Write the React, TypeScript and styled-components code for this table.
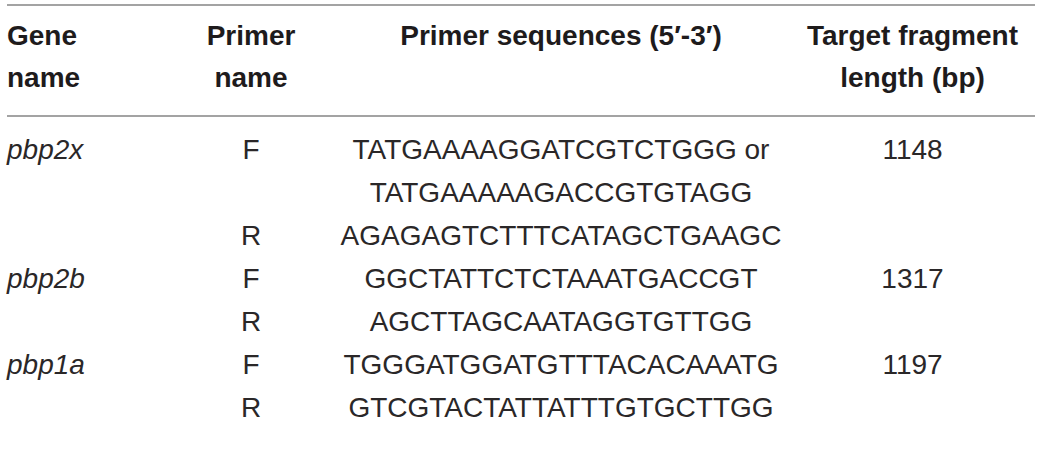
import React from 'react'
import styled, { createGlobalStyle } from 'styled-components'

const GlobalStyle = createGlobalStyle`
	html, body {
		margin: 0;
		padding: 0;
		background: #ffffff;
	}
	body {
		font-family: "Liberation Sans", Arial, Helvetica, sans-serif;
		color: #231f20;
	}
`

const Table = styled.div`
	width: 1028px;
	margin-left: 7px;
	padding-top: 4px;
`

const Rule = styled.div`
	height: 0;
	border-top: 2px solid #a3a3a3;
`

const Grid = styled.div<{ $head?: boolean }>`
	display: grid;
	grid-template-columns: 163px 162px 458px 245px;
	padding: ${(p) => (p.$head ? '9px 0 16px' : '11px 0 0')};
	font-size: 28px;
	line-height: ${(p) => (p.$head ? '42px' : '43px')};
	font-weight: ${(p) => (p.$head ? 700 : 400)};
	color: ${(p) => (p.$head ? '#1e1b1c' : '#2a2728')};
`

const Cell = styled.div<{ $align?: 'left' | 'center'; $italic?: boolean }>`
	text-align: ${(p) => p.$align || 'center'};
	font-style: ${(p) => (p.$italic ? 'italic' : 'normal')};
	white-space: nowrap;
`

type Primer = { name: string; seqs: string[] }
type Gene = { gene: string; length: string; primers: Primer[] }

const genes: Gene[] = [
	{
		gene: 'pbp2x',
		length: '1148',
		primers: [
			{ name: 'F', seqs: ['TATGAAAAGGATCGTCTGGG or', 'TATGAAAAAGACCGTGTAGG'] },
			{ name: 'R', seqs: ['AGAGAGTCTTTCATAGCTGAAGC'] },
		],
	},
	{
		gene: 'pbp2b',
		length: '1317',
		primers: [
			{ name: 'F', seqs: ['GGCTATTCTCTAAATGACCGT'] },
			{ name: 'R', seqs: ['AGCTTAGCAATAGGTGTTGG'] },
		],
	},
	{
		gene: 'pbp1a',
		length: '1197',
		primers: [
			{ name: 'F', seqs: ['TGGGATGGATGTTTACACAAATG'] },
			{ name: 'R', seqs: ['GTCGTACTATTATTTGTGCTTGG'] },
		],
	},
]

export default function App() {
	return (
		<>
			<GlobalStyle />
			<Table>
				<Rule />
				<Grid $head>
					<Cell $align="left">Gene<br />name</Cell>
					<Cell>Primer<br />name</Cell>
					<Cell>Primer sequences (5′-3′)</Cell>
					<Cell>Target fragment<br />length (bp)</Cell>
				</Grid>
				<Rule />
				<Grid>
					{genes.map((g) => g.primers.map((p, i) => (
						<React.Fragment key={g.gene + p.name}>
							<Cell $align="left" $italic>{i === 0 ? g.gene : ''}</Cell>
							<Cell>{p.name}</Cell>
							<Cell>
								{p.seqs.map((s) => <div key={s}>{s}</div>)}
							</Cell>
							<Cell>{i === 0 ? g.length : ''}</Cell>
						</React.Fragment>
					)))}
				</Grid>
			</Table>
		</>
	)
}
